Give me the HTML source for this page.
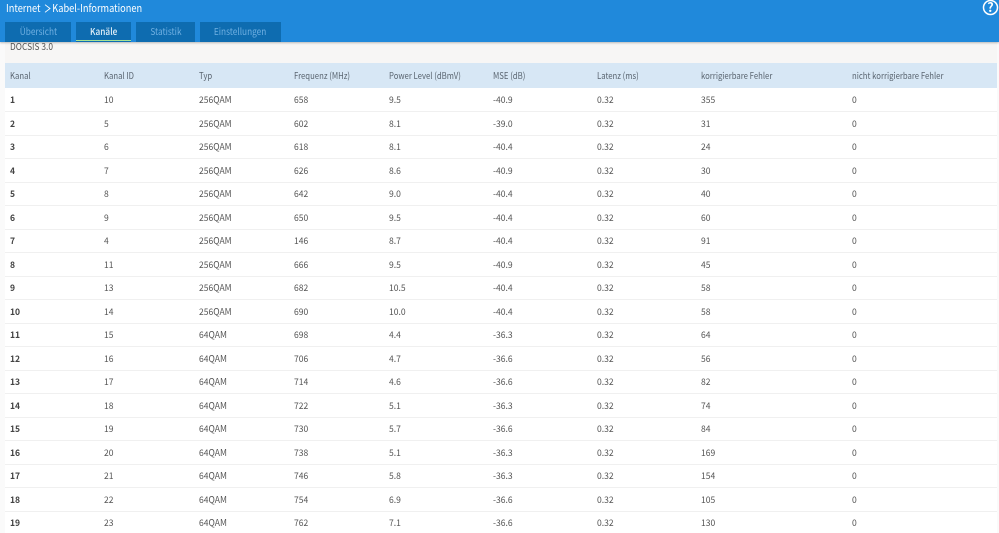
<!DOCTYPE html>
<html><head><meta charset="utf-8">
<style>
html,body{margin:0;padding:0;width:999px;height:533px;overflow:hidden;background:#fafafa;font-family:"Noto Sans CJK JP","Liberation Sans",sans-serif;color:#555;font-size:9px}
#hd{position:absolute;left:0;top:0;width:999px;height:42px;background:#2089db;box-shadow:0 1px 2px rgba(0,0,0,.25);z-index:3}
#crumb{position:absolute;left:6px;top:1px;font-size:10.5px;line-height:16px;color:#fff;white-space:nowrap;transform:scaleX(.88);transform-origin:0 0}
#chev{position:absolute;left:43.5px;top:4px}
.tab{position:absolute;top:22px;height:20px;background:#0e6cb0;color:#70b0e2;font-size:9.5px;line-height:18px;text-align:center}
.tab span{display:inline-block;transform:scaleX(.87)}
.tab.on{color:#e4f0f9;font-weight:500}
.tab.on::after{content:"";position:absolute;left:0;right:0;top:18px;height:1px;background:#a6e394}
#main{position:absolute;left:5px;top:42px;width:992px;height:491px;background:#fff}
#doc{position:absolute;left:10px;top:39px;font-size:9.5px;line-height:14px;color:#555;z-index:2;transform:scaleX(.88);transform-origin:0 0}
#band{position:absolute;left:5px;top:42px;width:992px;height:21px;background:#f7f6f5}
#th{position:absolute;left:5px;top:63px;width:992px;height:25px;background:#d7e7f5}
.r{position:absolute;left:0;width:999px;height:14px}
.r b,.r i{position:absolute;font-style:normal;line-height:14px;white-space:nowrap;transform-origin:0 50%;transform:scaleX(.95)}
.r b{font-weight:700;color:#444}
.h i{transform:scaleX(.86);color:#5a6570}
.r i:nth-child(1),.r b:nth-child(1){left:10px}
.r i:nth-child(2){left:104px}
.r i:nth-child(3){left:199px}
.r i:nth-child(4){left:294px}
.r i:nth-child(5){left:389px}
.r i:nth-child(6){left:493px}
.r i:nth-child(7){left:597px}
.r i:nth-child(8){left:701px}
.r i:nth-child(9){left:851.5px}
.l{position:absolute;left:5px;width:992px;height:1px;background:#f0f0f0}
#q{position:absolute;left:982px;top:0}
</style></head><body>
<div id="main"></div><div id="band"></div><div id="th"></div>
<div id="hd">
<div id="crumb">Internet <span style="display:inline-block;width:11px"></span>Kabel-Informationen</div>
<svg id="chev" width="8" height="9" viewBox="0 0 8 9"><path d="M1 .7 6 4.5 1 8.3" fill="none" stroke="#fff" stroke-width=".9"/></svg>
<div class="tab" style="left:5px;width:66px"><span>Übersicht</span></div>
<div class="tab on" style="left:76px;width:55px"><span>Kanäle</span></div>
<div class="tab" style="left:136px;width:59px"><span>Statistik</span></div>
<div class="tab" style="left:200px;width:81px"><span>Einstellungen</span></div>
<svg id="q" width="17" height="17" viewBox="0 0 17 17"><circle cx="8.5" cy="7.5" r="7" fill="none" stroke="#fff" stroke-width="1.5"/><text x="8.5" y="12" font-size="12.5" font-weight="700" text-anchor="middle" fill="#fff" font-family="Noto Sans CJK JP,sans-serif">?</text></svg>
</div>
<div id="doc">DOCSIS 3.0</div>
<div class="r h" style="top:69px"><i>Kanal</i><i>Kanal ID</i><i>Typ</i><i>Frequenz (MHz)</i><i>Power Level (dBmV)</i><i>MSE (dB)</i><i>Latenz (ms)</i><i>korrigierbare Fehler</i><i>nicht korrigierbare Fehler</i></div>
<div class="r" style="top:93px"><b>1</b><i>10</i><i>256QAM</i><i>658</i><i>9.5</i><i>-40.9</i><i>0.32</i><i>355</i><i>0</i></div><div class="l" style="top:111px"></div>
<div class="r" style="top:116.5px"><b>2</b><i>5</i><i>256QAM</i><i>602</i><i>8.1</i><i>-39.0</i><i>0.32</i><i>31</i><i>0</i></div><div class="l" style="top:135px"></div>
<div class="r" style="top:140px"><b>3</b><i>6</i><i>256QAM</i><i>618</i><i>8.1</i><i>-40.4</i><i>0.32</i><i>24</i><i>0</i></div><div class="l" style="top:158px"></div>
<div class="r" style="top:163.5px"><b>4</b><i>7</i><i>256QAM</i><i>626</i><i>8.6</i><i>-40.9</i><i>0.32</i><i>30</i><i>0</i></div><div class="l" style="top:182px"></div>
<div class="r" style="top:187px"><b>5</b><i>8</i><i>256QAM</i><i>642</i><i>9.0</i><i>-40.4</i><i>0.32</i><i>40</i><i>0</i></div><div class="l" style="top:205px"></div>
<div class="r" style="top:210.5px"><b>6</b><i>9</i><i>256QAM</i><i>650</i><i>9.5</i><i>-40.4</i><i>0.32</i><i>60</i><i>0</i></div><div class="l" style="top:229px"></div>
<div class="r" style="top:234px"><b>7</b><i>4</i><i>256QAM</i><i>146</i><i>8.7</i><i>-40.4</i><i>0.32</i><i>91</i><i>0</i></div><div class="l" style="top:252px"></div>
<div class="r" style="top:257.5px"><b>8</b><i>11</i><i>256QAM</i><i>666</i><i>9.5</i><i>-40.9</i><i>0.32</i><i>45</i><i>0</i></div><div class="l" style="top:276px"></div>
<div class="r" style="top:281px"><b>9</b><i>13</i><i>256QAM</i><i>682</i><i>10.5</i><i>-40.4</i><i>0.32</i><i>58</i><i>0</i></div><div class="l" style="top:299px"></div>
<div class="r" style="top:304.5px"><b>10</b><i>14</i><i>256QAM</i><i>690</i><i>10.0</i><i>-40.4</i><i>0.32</i><i>58</i><i>0</i></div><div class="l" style="top:323px"></div>
<div class="r" style="top:328px"><b>11</b><i>15</i><i>64QAM</i><i>698</i><i>4.4</i><i>-36.3</i><i>0.32</i><i>64</i><i>0</i></div><div class="l" style="top:346px"></div>
<div class="r" style="top:351.5px"><b>12</b><i>16</i><i>64QAM</i><i>706</i><i>4.7</i><i>-36.6</i><i>0.32</i><i>56</i><i>0</i></div><div class="l" style="top:370px"></div>
<div class="r" style="top:375px"><b>13</b><i>17</i><i>64QAM</i><i>714</i><i>4.6</i><i>-36.6</i><i>0.32</i><i>82</i><i>0</i></div><div class="l" style="top:393px"></div>
<div class="r" style="top:398.5px"><b>14</b><i>18</i><i>64QAM</i><i>722</i><i>5.1</i><i>-36.3</i><i>0.32</i><i>74</i><i>0</i></div><div class="l" style="top:417px"></div>
<div class="r" style="top:422px"><b>15</b><i>19</i><i>64QAM</i><i>730</i><i>5.7</i><i>-36.6</i><i>0.32</i><i>84</i><i>0</i></div><div class="l" style="top:440px"></div>
<div class="r" style="top:445.5px"><b>16</b><i>20</i><i>64QAM</i><i>738</i><i>5.1</i><i>-36.3</i><i>0.32</i><i>169</i><i>0</i></div><div class="l" style="top:464px"></div>
<div class="r" style="top:469px"><b>17</b><i>21</i><i>64QAM</i><i>746</i><i>5.8</i><i>-36.3</i><i>0.32</i><i>154</i><i>0</i></div><div class="l" style="top:487px"></div>
<div class="r" style="top:492.5px"><b>18</b><i>22</i><i>64QAM</i><i>754</i><i>6.9</i><i>-36.6</i><i>0.32</i><i>105</i><i>0</i></div><div class="l" style="top:511px"></div>
<div class="r" style="top:516px"><b>19</b><i>23</i><i>64QAM</i><i>762</i><i>7.1</i><i>-36.6</i><i>0.32</i><i>130</i><i>0</i></div>
</body></html>
